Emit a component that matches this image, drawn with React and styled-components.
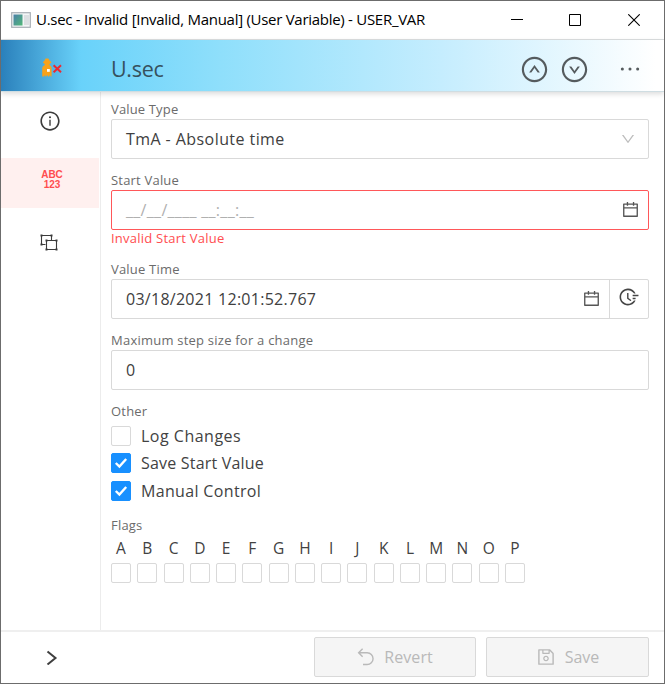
import React from "react";
import styled, { createGlobalStyle, css } from "styled-components";
import {
  AiOutlineInfoCircle,
  AiOutlineUpCircle,
  AiOutlineDownCircle,
  AiOutlineEllipsis,
  AiOutlineSave,
  AiOutlineCalendar,
  AiOutlineFieldTime,
  AiOutlineDown,
} from "react-icons/ai";

const GlobalStyle = createGlobalStyle`
  * { box-sizing: border-box; }
  body {
    margin: 0;
    background: #fff;
    font-family: "Open Sans", "Noto Sans", sans-serif;
    color: #424242;
  }
  svg { display: block; flex: none; }
`;

const Window = styled.div`
  width: 665px;
  height: 684px;
  display: flex;
  flex-direction: column;
  overflow: hidden;
  border: 1px solid #6c6c6c;
  background: #fff;
`;

const TitleBar = styled.div`
  height: 39px;
  flex: none;
  display: flex;
  align-items: center;
  border-bottom: 1px solid #dcdfe0;
  padding: 0 1px 0 10px;
`;

const TitleText = styled.div`
  flex: 1;
  margin-left: 5px;
  padding-bottom: 2px;
  font-size: 15px;
  letter-spacing: ${(p) => p.$spacing}px;
  color: #000;
  white-space: nowrap;
`;

const WindowButton = styled.div`
  width: 58.5px;
  height: 38px;
  display: flex;
  align-items: center;
  justify-content: center;
`;

const Header = styled.div`
  position: relative;
  height: 52px;
  flex: none;
  display: flex;
  align-items: center;
  background: linear-gradient(90deg, #2a80bb 0, #69d2fa 80px, #8fdffb 220px, #c5edfe 440px, #fff 655px);
  border-bottom: 1px solid #cfdde2;
  box-shadow: 0 2px 5px rgba(0, 0, 0, 0.14);
`;

const HeaderIcon = styled.div`
  width: 110px;
  padding-left: 40px;
  padding-top: 5px;
`;

const HeaderTitle = styled.div`
  flex: 1;
  font-size: 21.5px;
  letter-spacing: ${(p) => p.$spacing}px;
  line-height: 30px;
  padding-top: 7px;
  color: #36515d;
`;

const HeaderActions = styled.div`
  display: flex;
  align-items: center;
  gap: 11px;
  padding: 7px 20.5px 0 0;
  color: #555b5e;
`;

const MoreButton = styled.div`
  margin-left: 16px;
`;

const Body = styled.div`
  flex: 1;
  min-height: 0;
  display: flex;
`;

const Sidebar = styled.div`
  width: 100px;
  flex: none;
  padding-top: 5px;
  border-right: 1px solid #ececec;
`;

const Tab = styled.div`
  width: 98px;
  height: ${(p) => p.$height}px;
  padding-bottom: ${(p) => p.$lift || 0}px;
  padding-right: ${(p) => p.$inset || 0}px;
  display: flex;
  align-items: center;
  justify-content: center;
  color: #3c3c3c;
  ${(p) =>
    p.$active &&
    css`
      background: #fff0ef;
      color: #ff4d4f;
    `}
`;

const AbcLabel = styled.div`
  font-family: "Liberation Sans", sans-serif;
  font-size: 10px;
  line-height: 9.8px;
  text-align: center;
  font-weight: 700;
  margin-left: 4px;
`;

const Form = styled.div`
  flex: 1;
  padding: 8px 15px 0 10px;
`;

const Label = styled.div`
  font-size: 13px;
  line-height: ${(p) => (p.$error ? 16 : 18)}px;
  height: 19px;
  letter-spacing: ${(p) => p.$spacing ?? 0.2}px;
  color: ${(p) => (p.$error ? "#ff4d4f" : "#6b6b6b")};
  margin-top: ${(p) => p.$gap || 0}px;
  white-space: nowrap;
`;

const Input = styled.div`
  height: 40px;
  display: flex;
  align-items: stretch;
  border: 1px solid ${(p) => (p.$error ? "#ff5759" : "#d9d9d9")};
  border-radius: 2px;
  font-size: 16px;
  color: ${(p) => (p.$error ? "#b0b0b0" : "#404040")};
`;

const Value = styled.div`
  flex: 1;
  padding-left: 14px;
  line-height: 39px;
  letter-spacing: ${(p) => p.$spacing || 0}px;
  white-space: nowrap;
`;

const Suffix = styled.div`
  display: flex;
  align-items: center;
  padding: 0 ${(p) => (p.$faint ? 12 : 8)}px ${(p) => (p.$faint ? 0 : 2)}px 0;
  color: ${(p) => (p.$faint ? "#bdbdbd" : "#555")};
`;

const NowButton = styled.div`
  width: 39px;
  display: flex;
  justify-content: center;
  padding-top: 6px;
  border-left: 1px solid #d9d9d9;
  color: #454545;
`;

const CheckList = styled.div`
  padding-top: 1px;
`;

const CheckRow = styled.div`
  height: 27.5px;
  display: flex;
  align-items: center;
  gap: 10px;
  font-size: 16px;
  letter-spacing: ${(p) => p.$spacing}px;
  line-height: 24px;
`;

const CheckBox = styled.div`
  width: 20px;
  height: 20px;
  flex: none;
  display: flex;
  align-items: center;
  justify-content: center;
  border: 1px solid ${(p) => (p.$checked ? "#1890ff" : "#d9d9d9")};
  border-radius: 2px;
  background: ${(p) => (p.$checked ? "#1890ff" : "#fff")};
`;

const Flags = styled.div`
  display: flex;
  gap: 6.27px;
`;

const Flag = styled.div`
  width: 20px;
  display: flex;
  flex-direction: column;
  align-items: center;
  font-size: 15.5px;
  line-height: 27px;
  gap: 1px;
`;

const Footer = styled.div`
  height: 53px;
  flex: none;
  display: flex;
  align-items: center;
  border-top: 2px solid #efefef;
  padding: 0 15px 1px 43px;
  gap: 10px;
`;

const Spacer = styled.div`
  flex: 1;
`;

const Button = styled.div`
  width: ${(p) => p.$width}px;
  height: 40px;
  display: flex;
  align-items: center;
  justify-content: center;
  gap: 9px;
  border: 1px solid #d9d9d9;
  border-radius: 2px;
  background: #f5f5f5;
  color: #b9b9b9;
  font-size: 16px;
  letter-spacing: ${(p) => p.$spacing}px;
`;

const WindowIcon = () => (
  <svg width="20" height="16" viewBox="0 0 20 16">
    <defs>
      <linearGradient id="pane" x1="0" y1="0" x2="1" y2="1">
        <stop offset="0" stopColor="#4a7fa8" />
        <stop offset="1" stopColor="#52b878" />
      </linearGradient>
    </defs>
    <rect x="0.7" y="0.7" width="18.6" height="14.6" fill="#f3f5f6" stroke="#a8afb5" strokeWidth="1.2" />
    <rect x="2.5" y="2.5" width="9" height="11" fill="url(#pane)" />
    <rect x="13" y="3" width="5" height="10" fill="#dcdfe2" />
  </svg>
);

const VariableIcon = () => (
  <svg width="22" height="20" viewBox="0 0 22 20">
    <path
      d="M4.6 0.6H7.4L8.5 2.6L10.6 4.2L8.2 6.4L8.8 7.2Q10.6 8.2 10.6 10V18.6H9.4V17.6H8.2V18.6H7V17.6H5.6V18.6H4.4V17.6H3.2V18.6H1.2V10Q1.2 8.2 3.4 7.2L4 6.4L1.8 4.2L3.6 2.6Z"
      fill="#f7a21b"
    />
    <rect x="6" y="11" width="2.8" height="2.8" fill="#fff" />
    <path d="M12.6 7.2L20 14.2M20 7.2L12.6 14.2" stroke="#ee2830" strokeWidth="2" />
  </svg>
);

const GroupIcon = () => (
  <svg width="20" height="20" viewBox="0 0 20 20" fill="none" stroke="currentColor">
    <path d="M6.5 11.5H2.5V2.5H12.5V7M7.5 7.5H17.5V16.5H7.5Z" strokeWidth="1.1" />
    <path
      d="M1.5 1.5h2v2h-2zM11.5 1.5h2v2h-2zM1.5 10.5h2v2h-2zM6.5 6.5h2v2h-2zM16.5 6.5h2v2h-2zM6.5 15.5h2v2h-2zM16.5 15.5h2v2h-2z"
      fill="currentColor"
      stroke="none"
    />
  </svg>
);

const RevertIcon = () => (
  <svg width="18" height="18" viewBox="0 0 18 18" fill="none" stroke="currentColor" strokeWidth="1.4">
    <path d="M5.6 0.8L1.6 4.8L5.6 8.8M1.8 4.8H10.2A5.8 5.8 0 0 1 10.2 16.5H6" />
  </svg>
);

const Tick = () => (
  <svg width="14" height="12" viewBox="0 0 14 12">
    <path d="M1.8 6L5.4 9.5L12.2 2" fill="none" stroke="#fff" strokeWidth="2.4" />
  </svg>
);

const options = [
  { text: "Log Changes", checked: false, spacing: 0.5 },
  { text: "Save Start Value", checked: true, spacing: 0.2 },
  { text: "Manual Control", checked: true, spacing: 0.34 },
];

export default function App() {
  return (
    <Window>
      <GlobalStyle />
      <TitleBar>
        <WindowIcon />
        <TitleText $spacing={-0.28}>U.sec - Invalid [Invalid, Manual] (User Variable) - USER_VAR</TitleText>
        <WindowButton>
          <svg width="12" height="12"><path d="M0 5.5H12" stroke="#000" /></svg>
        </WindowButton>
        <WindowButton>
          <svg width="12" height="12"><path d="M.5 .5H11.5V11.5H.5Z" fill="none" stroke="#000" /></svg>
        </WindowButton>
        <WindowButton>
          <svg width="12" height="12"><path d="M.3 .3L11.7 11.7M11.7 .3L.3 11.7" stroke="#000" strokeWidth="1.1" /></svg>
        </WindowButton>
      </TitleBar>
      <Header>
        <HeaderIcon><VariableIcon /></HeaderIcon>
        <HeaderTitle $spacing={-0.3}>U.sec</HeaderTitle>
        <HeaderActions>
          <AiOutlineUpCircle size={29} />
          <AiOutlineDownCircle size={29} />
          <MoreButton><AiOutlineEllipsis size={28} /></MoreButton>
        </HeaderActions>
      </Header>
      <Body>
        <Sidebar>
          <Tab $height={61} $lift={13}><AiOutlineInfoCircle size={22} /></Tab>
          <Tab $height={50} $lift={6} $active><AbcLabel>ABC<br />123</AbcLabel></Tab>
          <Tab $height={69} $inset={3}><GroupIcon /></Tab>
        </Sidebar>
        <Form>
          <Label $spacing={0.15}>Value Type</Label>
          <Input>
            <Value $spacing={0.43}>TmA - Absolute time</Value>
            <Suffix $faint><AiOutlineDown size={16} /></Suffix>
          </Input>
          <Label $gap={12}>Start Value</Label>
          <Input $error>
            <Value $spacing={0.3}>__/__/____ __:__:__</Value>
            <Suffix><AiOutlineCalendar size={19} /></Suffix>
          </Input>
          <Label $error $spacing={0.23}>Invalid Start Value</Label>
          <Label $gap={11}>Value Time</Label>
          <Input>
            <Value $spacing={0.27}>03/18/2021 12:01:52.767</Value>
            <Suffix><AiOutlineCalendar size={19} /></Suffix>
            <NowButton><AiOutlineFieldTime size={22} /></NowButton>
          </Input>
          <Label $gap={12} $spacing={0.23}>Maximum step size for a change</Label>
          <Input><Value>0</Value></Input>
          <Label $gap={12}>Other</Label>
          <CheckList>
            {options.map((o) => (
              <CheckRow key={o.text} $spacing={o.spacing}>
                <CheckBox $checked={o.checked}>{o.checked && <Tick />}</CheckBox>
                {o.text}
              </CheckRow>
            ))}
          </CheckList>
          <Label $gap={11}>Flags</Label>
          <Flags>
            {[..."ABCDEFGHIJKLMNOP"].map((letter) => (
              <Flag key={letter}>{letter}<CheckBox /></Flag>
            ))}
          </Flags>
        </Form>
      </Body>
      <Footer>
        <svg width="14" height="16" viewBox="0 0 14 16" fill="none" stroke="#3f3f3f" strokeWidth="2">
          <path d="M3.5 2.5L11.5 9L3.5 15.5" />
        </svg>
        <Spacer />
        <Button $width={162} $spacing={0.1}><RevertIcon />Revert</Button>
        <Button $width={163} $spacing={0}><AiOutlineSave size={20} />Save</Button>
      </Footer>
    </Window>
  );
}
